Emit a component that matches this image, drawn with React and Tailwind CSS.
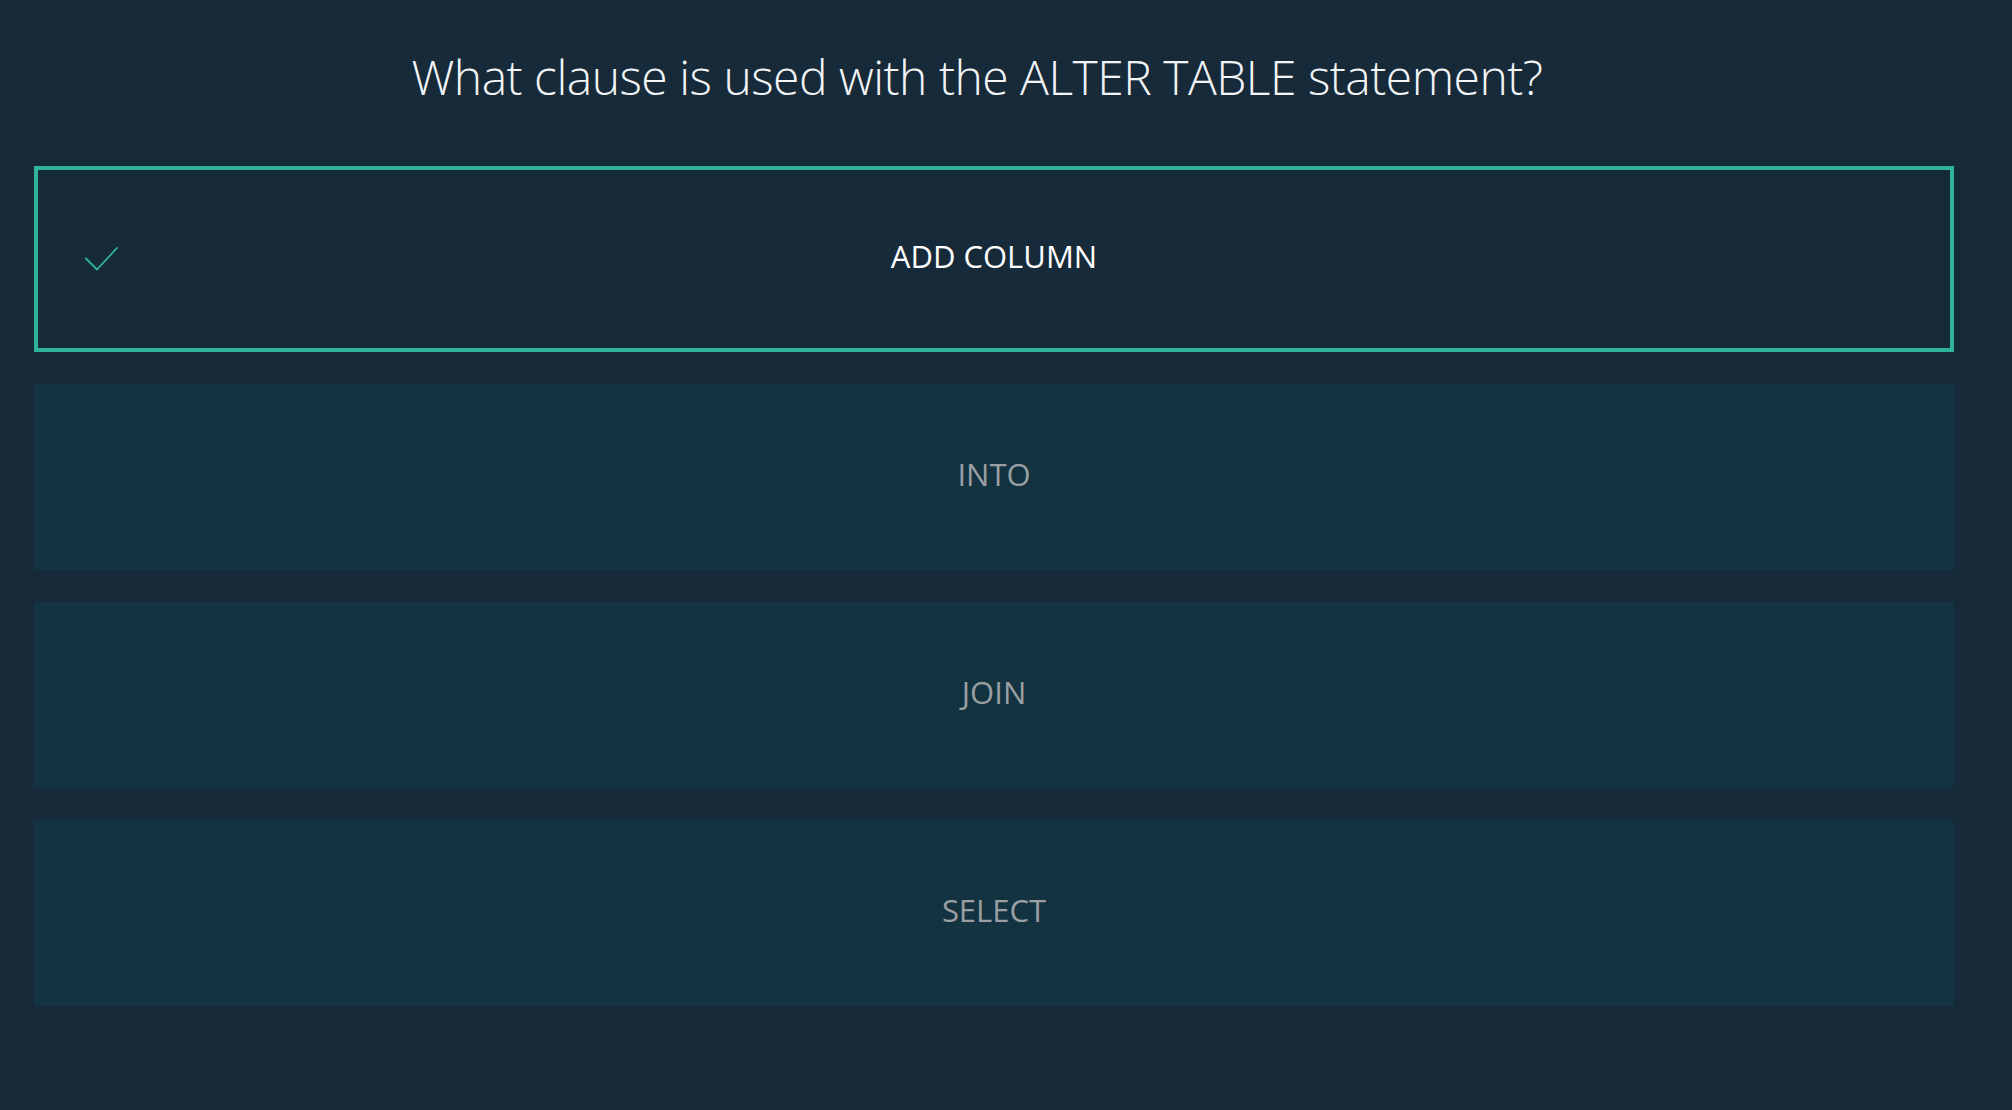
import React from "react";

const options = [
  { label: "ADD COLUMN", selected: true },
  { label: "INTO" },
  { label: "JOIN" },
  { label: "SELECT" },
];

export default function App() {
  return (
    <div
      className="w-[2012px] h-[1110px] bg-[#172a3a] overflow-hidden"
      style={{ fontFamily: '"Open Sans", "Noto Sans", sans-serif' }}
    >
      <div className="w-[1954px] pt-[53px]">
        <h1 className="text-center text-[48px] leading-[48px] font-light text-[#f2f4f5] tracking-[-0.5px]">
          What clause is used with the ALTER TABLE statement?
        </h1>
        <div className="ml-[34px] w-[1920px] mt-[65px] flex flex-col gap-[32px]">
          {options.map((o) =>
            o.selected ? (
              <div
                key={o.label}
                className="h-[186px] border-4 border-[#2fb39b] bg-[#172a3a] grid grid-cols-[1fr_auto_1fr] items-center"
              >
                <div className="pl-[46px]">
                  <svg width="36" height="26" viewBox="0 0 36 26" fill="none">
                    <polyline
                      points="2,12.5 13,23.5 33,2"
                      stroke="#2fb39b"
                      strokeWidth="1.8"
                      strokeLinecap="round"
                      strokeLinejoin="round"
                    />
                  </svg>
                </div>
                <span className="text-[31px] leading-[40px] pb-[6px] text-white">{o.label}</span>
                <div />
              </div>
            ) : (
              <div
                key={o.label}
                className="h-[186px] bg-[#12333f] flex items-center justify-center"
              >
                <span className="text-[31px] leading-[40px] pb-[6px] text-[#9a9fa3]">{o.label}</span>
              </div>
            )
          )}
        </div>
      </div>
    </div>
  );
}
